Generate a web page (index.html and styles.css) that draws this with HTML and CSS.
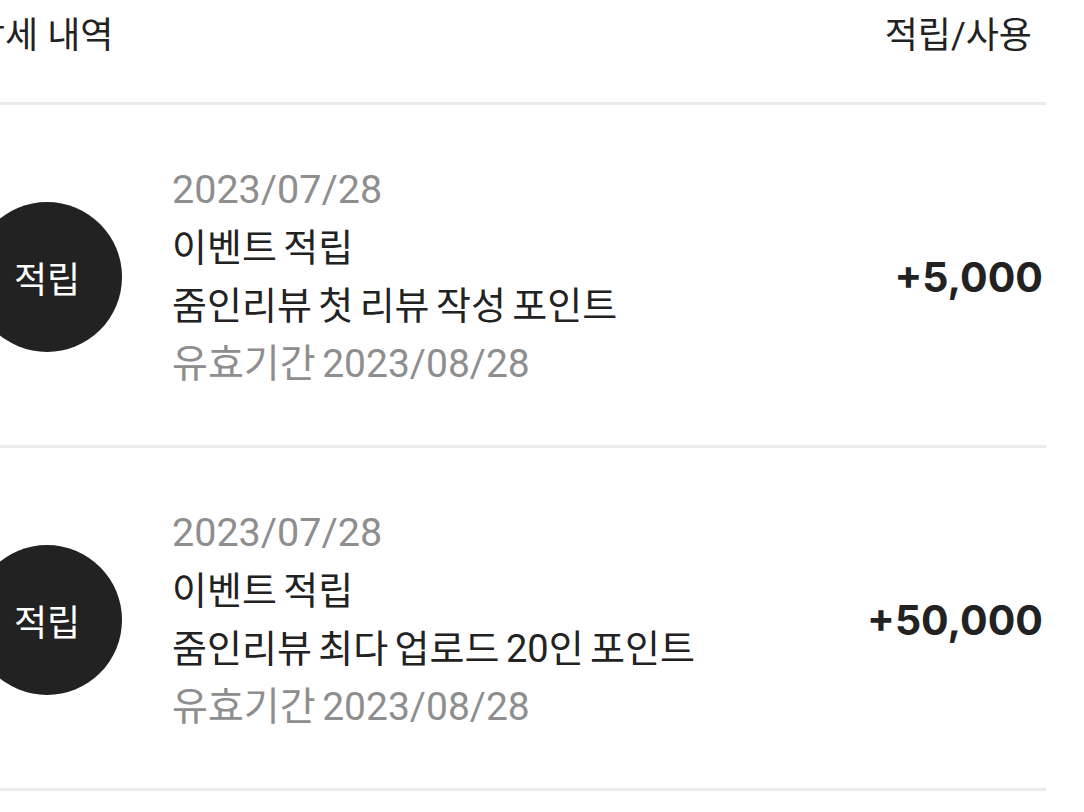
FILE: index.html
```html
<!DOCTYPE html>
<html lang="ko">
<head>
<meta charset="utf-8">
<title>포인트 상세 내역</title>
<link rel="stylesheet" href="styles.css">
</head>
<body>
<div class="page">
  <div class="list-head">
    <span class="head-title">상세 내역</span>
    <span class="head-filter">적립/사용</span>
  </div>
  <ul class="history">
    <li class="entry">
      <div class="badge">적립</div>
      <div class="info">
        <div class="date">2023/07/28</div>
        <div class="title">이벤트 적립</div>
        <div class="desc">줌인리뷰 첫 리뷰 작성 포인트</div>
        <div class="expire">유효기간 2023/08/28</div>
      </div>
      <div class="amount">+5,000</div>
    </li>
    <li class="entry">
      <div class="badge">적립</div>
      <div class="info">
        <div class="date">2023/07/28</div>
        <div class="title">이벤트 적립</div>
        <div class="desc">줌인리뷰 최다 업로드 20인 포인트</div>
        <div class="expire">유효기간 2023/08/28</div>
      </div>
      <div class="amount">+50,000</div>
    </li>
  </ul>
</div>
</body>
</html>
```

FILE: styles.css
```css
html, body {
  margin: 0;
  padding: 0;
  background: #ffffff;
}

body {
  width: 1084px;
  height: 812px;
  overflow: hidden;
  font-family: "Roboto", "Noto Sans CJK KR", sans-serif;
  color: #222222;
}

.page {
  margin-left: -28px;
  width: 1074px;
}

.list-head {
  display: flex;
  justify-content: space-between;
  align-items: flex-start;
  height: 105px;
  box-sizing: border-box;
  padding: 8px 14px 0 0;
  line-height: 57px;
  font-size: 36px;
  border-bottom: 3px solid #ebebeb;
}

.history {
  list-style: none;
  margin: 0;
  padding: 0;
}

.entry {
  display: flex;
  align-items: center;
  height: 343px;
  box-sizing: border-box;
  padding-top: 4px;
  border-bottom: 3px solid #ebebeb;
}

.badge {
  flex: none;
  width: 150px;
  height: 150px;
  border-radius: 50%;
  background: #222222;
  color: #ffffff;
  display: flex;
  align-items: center;
  justify-content: center;
  font-size: 36px;
}

.info {
  flex: 1;
  margin-left: 50px;
  font-size: 38px;
  line-height: 58px;
  word-spacing: -3px;
}

.date,
.expire {
  color: #8e8e8e;
}

.date {
  font-size: 39.5px;
}

.expire {
  font-size: 39px;
}

.amount {
  flex: none;
  font-family: "Inter", "Noto Sans CJK KR", sans-serif;
  font-weight: 700;
  font-size: 41px;
  padding-right: 3px;
}
```
